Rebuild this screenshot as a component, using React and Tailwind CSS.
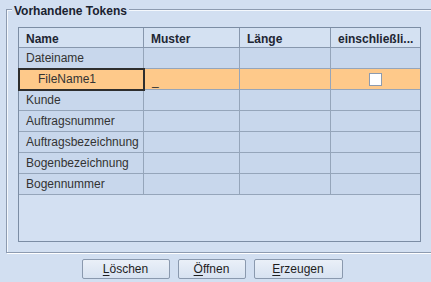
import React from "react";

const columns = [
  { label: "Name", width: "w-[125px]" },
  { label: "Muster", width: "w-[96px]" },
  { label: "Länge", width: "w-[91px]" },
  { label: "einschließli...", width: "w-[89px]" },
];

const rows = [
  "Dateiname",
  "FileName1",
  "Kunde",
  "Auftragsnummer",
  "Auftragsbezeichnung",
  "Bogenbezeichnung",
  "Bogennummer",
];

const Button = ({ mnemonic, rest, width }) => (
  <button
    className={`${width} h-[20px] border border-[#8a99ae] rounded-[2px] bg-gradient-to-b from-[#eaf0f8] to-[#d7e2f1] text-[12px] leading-[14px] text-[#1e1e1e] flex items-center justify-center`}
  >
    <span>
      <span className="underline underline-offset-2">{mnemonic}</span>
      {rest}
    </span>
  </button>
);

export default function App() {
  return (
    <div
      className="w-[431px] h-[282px] overflow-hidden bg-[#d2dff1]"
      style={{ fontFamily: '"Liberation Sans", Arial, sans-serif' }}
    >
      {/* Titled group */}
      <fieldset className="ml-[6px] w-[440px] h-[253px] border border-[#8d9bb0] shadow-[inset_1px_1px_0_#f4f8fd,1px_1px_0_#ffffff]">
        <legend className="ml-[5px] px-[2px] pt-[4px] text-[12px] leading-[14px] font-bold text-[#1a2230] bg-[#d2dff1]">
          Vorhandene Tokens
        </legend>

        <div className="pl-[11px] pt-[9px]">
          {/* Table */}
          <div className="w-[403px] h-[215px] border border-[#7c8da4] bg-[#d3e0f2] text-[12px] leading-[14px]">
            {/* head */}
            <div className="flex h-[20px] bg-[#d4e1f2]">
              {columns.map((col, i) => (
                <div
                  key={col.label}
                  className={`${col.width} h-[20px] border-b border-[#8797ad] ${
                    i < 3 ? "border-r" : ""
                  } flex items-center pt-[2px] px-[7px] font-bold text-[#1e2633] whitespace-nowrap overflow-hidden`}
                >
                  {col.label}
                </div>
              ))}
            </div>

            {/* body */}
            {rows.map((name, r) => {
              const selected = r === 1;
              return (
                <div
                  key={name}
                  className={`flex h-[21px] ${
                    selected ? "bg-[#fec98a]" : "bg-[#c8d7ec]"
                  }`}
                >
                  {columns.map((col, i) => (
                    <div
                      key={col.label}
                      className={`${col.width} h-[21px] border-b border-[#95a5ba] ${
                        i < 3 ? "border-r" : ""
                      } flex items-center text-[#333333] ${
                        selected && i === 0
                          ? "relative z-10 outline-2 outline-[#2e2e2e] -outline-offset-1 pl-[19px]"
                          : "px-[7px]"
                      } ${i === 3 ? "justify-center" : ""}`}
                    >
                      {i === 0 && name}
                      {selected && i === 1 && (
                        <span className="pl-[1px] pt-[3px]">_</span>
                      )}
                      {selected && i === 3 && (
                        <span className="w-[13px] h-[13px] bg-white border border-[#8c9bb0]" />
                      )}
                    </div>
                  ))}
                </div>
              );
            })}
          </div>
        </div>
      </fieldset>

      {/* Buttons */}
      <div className="mt-[6px] pr-[7px] flex justify-center gap-[8px]">
        <Button mnemonic="L" rest="öschen" width="w-[88px]" />
        <Button mnemonic="Ö" rest="ffnen" width="w-[68px]" />
        <Button mnemonic="E" rest="rzeugen" width="w-[89px]" />
      </div>
    </div>
  );
}
